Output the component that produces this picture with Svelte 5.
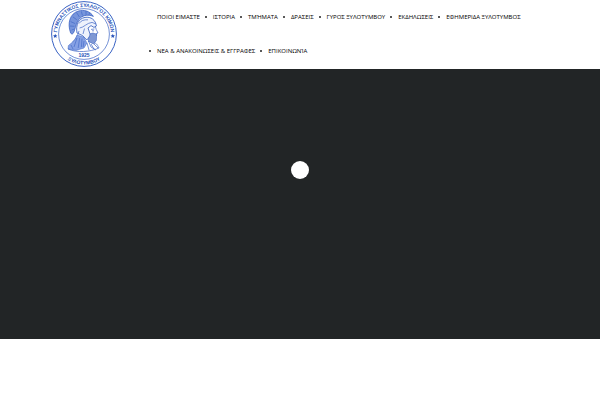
<script>
  const links = [
    'ΠΟΙΟΙ ΕΙΜΑΣΤΕ',
    'ΙΣΤΟΡΙΑ',
    'ΤΜΉΜΑΤΑ',
    'ΔΡΑΣΕΙΣ',
    'ΓΥΡΟΣ ΞΥΛΟΤΥΜΒΟΥ',
    'ΕΚΔΗΛΩΣΕΙΣ',
    'ΕΦΗΜΕΡΙΔΑ ΞΥΛΟΤΥΜΒΟΣ',
    'ΝΕΑ & ΑΝΑΚΟΙΝΩΣΕΙΣ & ΕΓΓΡΑΦΕΣ',
    'ΕΠΙΚΟΙΝΩΝΊΑ',
  ];
</script>

<header>
  <a class="logo" href="#home" aria-label="ΓΥΜΝΑΣΤΙΚΟΣ ΣΥΛΛΟΓΟΣ ΚΙΜΩΝ">
    <svg viewBox="0 0 68 68" aria-hidden="true">
      <defs>
        <path id="arc-top" d="M7.3 38 A27 27 0 1 1 60.7 38" />
        <path id="arc-bottom" d="M4 40 A30.6 30.6 0 0 0 64 40" />
      </defs>
      <circle class="ring" cx="34" cy="34" r="32.4" />
      <circle class="ring thin" cx="34" cy="34" r="25.4" />
      <text class="club"><textPath href="#arc-top" startOffset="50%">ΓΥΜΝΑΣΤΙΚΟΣ ΣΥΛΛΟΓΟΣ ΚΙΜΩΝ</textPath></text>
      <text class="club"><textPath href="#arc-bottom" startOffset="50%">ΞΥΛΟΤΥΜΒΟΥ</textPath></text>
      <path class="star" d="M5.2 33.8l.6 1.5 1.6.1-1.2 1 .4 1.6-1.4-.9-1.4.9.4-1.6-1.2-1 1.6-.1z" />
      <path class="star" d="M62.8 33.8l.6 1.5 1.6.1-1.2 1 .4 1.6-1.4-.9-1.4.9.4-1.6-1.2-1 1.6-.1z" />

      <!-- crest -->
      <path class="crest" d="M20.6 33C17 23 20 13.5 28.4 11C34 9.4 40 11 43.4 16.4C38.6 14.4 33.6 15 30.3 18C26.3 21.8 25.8 27 24.3 31C23.3 33.8 22.1 35 20.6 33Z" />
      <path class="hair" d="M21.6 30l3-1M20 26l4.4.3M20.6 21.6l4.6 2M22.8 16.8l4 3M26.6 12.6l2.8 4.4M31.4 11.4l1 4M36 11.4v3.4M40 13l-1 1.6" />
      <!-- helmet -->
      <path class="metal" d="M27 33C25.5 25 28.5 18.5 35 17.4C41 16.4 45.6 20 46.4 26L44 27.4L41 25.6L38 28L40.6 35.6L36.8 40L32.6 35.6Z" />
      <path class="line" d="M29.6 28C34 27.5 36.5 23 42 22.4L46 24M33 34L34.5 28.5M29 23.5C31 20.5 34 19.5 38 19.8" />
      <!-- face and beard -->
      <path class="line" d="M45.4 26.6L46.2 29.4L48 33L46 33.6L46.6 36M41 29.4L44.4 29M42 30.8h2" />
      <path class="beard" d="M40.4 33.6L43 33L46.6 34.2L46.4 40.4L43.6 44L38.4 41.4L38.4 38.8Z" />
      <path class="line" d="M29 31C28 36 25 39 22.6 42M38.4 41L41 47L46 50M44 44L48 48" />
      <!-- shoulders -->
      <path class="cloak" d="M27 35L25 40L18.4 45.6L18 49L26 50.4L34 48L37 43L33.6 37Z" />
      <path class="hair" d="M27 38l-3 9M29.6 38l-1.4 10M32 38.6l-.6 8.6M34 41l-.8 6M21 45l2 4" />
      <path class="line" d="M18 49C27 53 40 52 49 48C47 44 46 43 44 43M37 43L39 50M41 44L44 49" />
      <text class="year" x="34" y="57">1925</text>
    </svg>
  </a>
  <nav>
    <ul>
      {#each links as link}
        <li><a href="#top">{link}</a></li>
      {/each}
    </ul>
  </nav>
</header>

<main>
  <section class="hero" aria-busy="true">
    <span class="loader" role="status" aria-label="Loading"></span>
  </section>
</main>

<style>
  :global(body) {
    margin: 0;
    background: #fff;
    font-family: 'Open Sans', 'Noto Sans', sans-serif;
  }
  header {
    display: flex;
    align-items: flex-start;
    padding: 0 50px;
  }
  .logo {
    flex: none;
    width: 68px;
    height: 69px;
    margin-right: 31px;
  }
  .logo svg {
    display: block;
    width: 68px;
    height: 68px;
  }
  nav {
    flex: 1;
  }
  ul {
    display: flex;
    flex-wrap: wrap;
    margin: 0;
    padding: 0;
    list-style: none;
  }
  li {
    display: flex;
    align-items: center;
    height: 34px;
    padding-right: 5px;
    font-size: 6px;
    white-space: nowrap;
  }
  li::before {
    content: '';
    width: 2px;
    height: 2px;
    margin-right: 6px;
    border-radius: 50%;
    background: #222;
  }
  li:first-child::before {
    background: transparent;
  }
  li a {
    color: #000;
    text-decoration: none;
  }
  .hero {
    display: flex;
    justify-content: center;
    height: 270px;
    background: #222526;
  }
  .loader {
    width: 18px;
    height: 18px;
    margin-top: 92px;
    border-radius: 50%;
    background: #fff;
  }
  .ring {
    fill: none;
    stroke: #3a63c4;
    stroke-width: 1;
  }
  .thin {
    stroke-width: 0.7;
  }
  .club,
  .year {
    fill: #2450b8;
    font-family: 'Liberation Sans', Arial, sans-serif;
    font-size: 5px;
    font-weight: 700;
    text-anchor: middle;
  }
  .star {
    fill: #2450b8;
  }
  .crest {
    fill: #7795dc;
    stroke: #2f58bd;
    stroke-width: 0.7;
  }
  .hair {
    fill: none;
    stroke: #2f58bd;
    stroke-width: 0.5;
  }
  .metal {
    fill: #eef2fc;
    stroke: #2f58bd;
    stroke-width: 0.8;
  }
  .line {
    fill: none;
    stroke: #3f66c4;
    stroke-width: 0.7;
  }
  .beard {
    fill: #7f98d4;
    stroke: #2f58bd;
    stroke-width: 0.5;
  }
  .cloak {
    fill: #85a0e4;
    stroke: #3f66c4;
    stroke-width: 0.5;
  }
</style>
